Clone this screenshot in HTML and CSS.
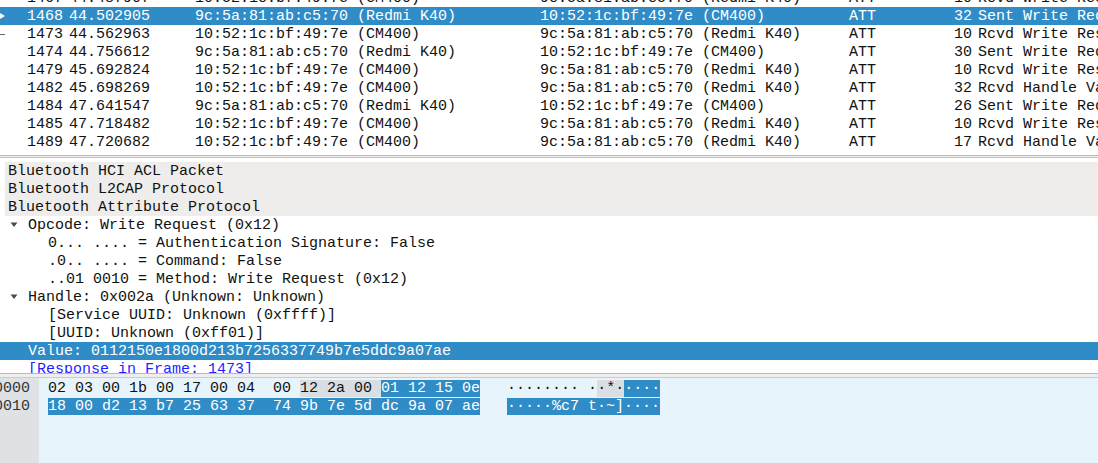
FILE: index.html
```html
<!DOCTYPE html>
<html>
<head>
<meta charset="utf-8">
<link rel="stylesheet" href="styles.css">
</head>
<body>
<div class="app">
  <div class="plist">
    <div class="prows">
      <div class="prow"><span class="c-no"><span class="mk"></span>1467</span><span class="c">44.487907</span><span class="c">10:52:1c:bf:49:7e (CM400)</span><span class="c">9c:5a:81:ab:c5:70 (Redmi K40)</span><span class="c">ATT</span><span class="c-len">10</span><span class="c">Rcvd Write Response, Handle: 0x002a (Unknown: Unknown)</span></div>
      <div class="prow sel"><span class="c-no"><span class="mk"><svg width="6" height="8" viewBox="0 0 6 8"><path d="M0 1 L5 4 L0 7 Z" fill="#ffffff"/></svg></span>1468</span><span class="c">44.502905</span><span class="c">9c:5a:81:ab:c5:70 (Redmi K40)</span><span class="c">10:52:1c:bf:49:7e (CM400)</span><span class="c">ATT</span><span class="c-len">32</span><span class="c">Sent Write Request, Handle: 0x002a (Unknown: Unknown)</span></div>
      <div class="prow"><span class="c-no"><span class="mk"><svg width="6" height="8" viewBox="0 0 6 8"><path d="M0 4.5 H5" stroke="#666" stroke-width="1"/></svg></span>1473</span><span class="c">44.562963</span><span class="c">10:52:1c:bf:49:7e (CM400)</span><span class="c">9c:5a:81:ab:c5:70 (Redmi K40)</span><span class="c">ATT</span><span class="c-len">10</span><span class="c">Rcvd Write Response, Handle: 0x002a (Unknown: Unknown)</span></div>
      <div class="prow"><span class="c-no"><span class="mk"></span>1474</span><span class="c">44.756612</span><span class="c">9c:5a:81:ab:c5:70 (Redmi K40)</span><span class="c">10:52:1c:bf:49:7e (CM400)</span><span class="c">ATT</span><span class="c-len">30</span><span class="c">Sent Write Request, Handle: 0x002a (Unknown: Unknown)</span></div>
      <div class="prow"><span class="c-no"><span class="mk"></span>1479</span><span class="c">45.692824</span><span class="c">10:52:1c:bf:49:7e (CM400)</span><span class="c">9c:5a:81:ab:c5:70 (Redmi K40)</span><span class="c">ATT</span><span class="c-len">10</span><span class="c">Rcvd Write Response, Handle: 0x002a (Unknown: Unknown)</span></div>
      <div class="prow"><span class="c-no"><span class="mk"></span>1482</span><span class="c">45.698269</span><span class="c">10:52:1c:bf:49:7e (CM400)</span><span class="c">9c:5a:81:ab:c5:70 (Redmi K40)</span><span class="c">ATT</span><span class="c-len">32</span><span class="c">Rcvd Handle Value Notification, Handle: 0x002d (Unknown: Unknown)</span></div>
      <div class="prow"><span class="c-no"><span class="mk"></span>1484</span><span class="c">47.641547</span><span class="c">9c:5a:81:ab:c5:70 (Redmi K40)</span><span class="c">10:52:1c:bf:49:7e (CM400)</span><span class="c">ATT</span><span class="c-len">26</span><span class="c">Sent Write Request, Handle: 0x002a (Unknown: Unknown)</span></div>
      <div class="prow"><span class="c-no"><span class="mk"></span>1485</span><span class="c">47.718482</span><span class="c">10:52:1c:bf:49:7e (CM400)</span><span class="c">9c:5a:81:ab:c5:70 (Redmi K40)</span><span class="c">ATT</span><span class="c-len">10</span><span class="c">Rcvd Write Response, Handle: 0x002a (Unknown: Unknown)</span></div>
      <div class="prow"><span class="c-no"><span class="mk"></span>1489</span><span class="c">47.720682</span><span class="c">10:52:1c:bf:49:7e (CM400)</span><span class="c">9c:5a:81:ab:c5:70 (Redmi K40)</span><span class="c">ATT</span><span class="c-len">17</span><span class="c">Rcvd Handle Value Notification, Handle: 0x002d (Unknown: Unknown)</span></div>
    </div>
  </div>
  <div class="split"></div>
  <div class="tree">
    <div class="trow top">Bluetooth HCI ACL Packet</div>
    <div class="trow top">Bluetooth L2CAP Protocol</div>
    <div class="trow top">Bluetooth Attribute Protocol</div>
    <div class="trow l1"><span class="arr"><svg width="8" height="6" viewBox="0 0 8 6"><path d="M0.5 0.5 H7.5 L4 5 Z" fill="#4a4a4a"/></svg></span>Opcode: Write Request (0x12)</div>
    <div class="trow l2">0... .... = Authentication Signature: False</div>
    <div class="trow l2">.0.. .... = Command: False</div>
    <div class="trow l2">..01 0010 = Method: Write Request (0x12)</div>
    <div class="trow l1"><span class="arr"><svg width="8" height="6" viewBox="0 0 8 6"><path d="M0.5 0.5 H7.5 L4 5 Z" fill="#4a4a4a"/></svg></span>Handle: 0x002a (Unknown: Unknown)</div>
    <div class="trow l2">[Service UUID: Unknown (0xffff)]</div>
    <div class="trow l2">[UUID: Unknown (0xff01)]</div>
    <div class="trow l1 leaf sel">Value: 0112150e1800d213b7256337749b7e5ddc9a07ae</div>
    <div class="trow l1 leaf link">[Response in Frame: 1473]</div>
  </div>
  <div class="split2"></div>
  <div class="bytes">
    <div class="offs">
      <div class="orow">0000</div>
      <div class="orow">0010</div>
    </div>
    <div class="hex">
      <div class="hrow">02 03 00 1b 00 17 00 04  00 <span class="g">12 2a 00 </span><span class="b">01 12 15 0e</span>   ········ ·<span class="g">·*·</span><span class="b">····</span></div>
      <div class="hrow"><span class="b">18 00 d2 13 b7 25 63 37  74 9b 7e 5d dc 9a 07 ae</span>   <span class="b">·····%c7 t·~]····</span></div>
    </div>
  </div>
</div>
</body>
</html>
```
FILE: styles.css
```css
html, body {
  margin: 0;
  padding: 0;
  background: #ffffff;
}
body {
  font-family: "Liberation Mono", "DejaVu Sans Mono", monospace;
  font-size: 15px;
  color: #111111;
  width: 1098px;
  height: 463px;
  overflow: hidden;
}
.app {
  display: flex;
  flex-direction: column;
  height: 463px;
}
.plist {
  height: 155px;
  overflow: hidden;
  border-bottom: 1px solid #bcb8b3;
  flex: none;
}
.prows {
  margin-top: -11px;
}
.prow {
  display: grid;
  grid-template-columns: 66px 126px 345px 309px 81px 48px 1fr;
  height: 18px;
  line-height: 20px;
  white-space: pre;
}
.prow.sel {
  background: #308cc6;
  color: #ffffff;
}
.c {
  padding-left: 3px;
  overflow: hidden;
}
.c-no, .c-len {
  display: flex;
  justify-content: flex-end;
  padding-right: 3px;
  height: 18px;
}
.c-no {
  justify-content: space-between;
}
.mk {
  width: 6px;
  height: 18px;
  display: flex;
  align-items: center;
}
.split {
  height: 1px;
  background: #efeeec;
  flex: none;
}
.tree {
  border-top: 1px solid #c6c2be;
  border-bottom: 1px solid #bcb8b3;
  padding-top: 4px;
  box-sizing: border-box;
  height: 217px;
  overflow: hidden;
  flex: none;
}
.trow {
  height: 18px;
  line-height: 20px;
  white-space: pre;
  display: flex;
  align-items: flex-start;
}
.trow.top {
  margin-left: 5px;
  padding-left: 3px;
  background: #eeedeb;
}
.trow.l1 {
  padding-left: 10px;
}
.trow.l1.leaf {
  padding-left: 28px;
}
.trow.l2 {
  padding-left: 48px;
}
.arr {
  width: 18px;
  height: 18px;
  display: flex;
  align-items: center;
}
.trow.sel {
  background: #308cc6;
  color: #ffffff;
}
.trow.link {
  color: #1f1fff;
}
.split2 {
  height: 3px;
  background: #efeeec;
  border-bottom: 1px solid #cfccc8;
  flex: none;
}
.bytes {
  flex: 1;
  display: flex;
  background: #e8f4fc;
  overflow: hidden;
  padding-top: 1px;
}
.offs {
  width: 39px;
  flex: none;
  background: #dee2e5;
  overflow: hidden;
  margin-top: -1px;
  padding-top: 1px;
}
.orow {
  height: 18px;
  line-height: 20px;
  display: flex;
  justify-content: flex-end;
  padding-right: 9px;
  color: #333333;
}
.hex {
  padding-left: 9px;
}
.hrow {
  height: 18px;
  line-height: 20px;
  white-space: pre;
}
.g {
  background: #d9dee3;
}
.b {
  background: #308cc6;
  color: #ffffff;
}
```
